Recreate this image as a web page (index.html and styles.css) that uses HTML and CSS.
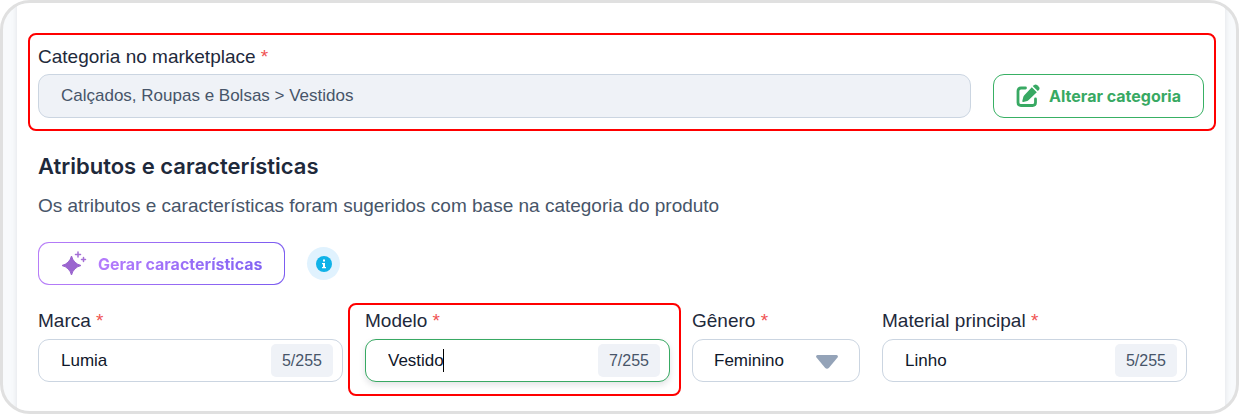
FILE: index.html
```html
<!DOCTYPE html>
<html lang="pt-BR">

<head>
    <meta charset="UTF-8">
    <meta name="viewport" content="width=device-width, initial-scale=1.0">
    <title>Atributos e características</title>
    <link rel="stylesheet" href="styles.css">
</head>

<body>
    <div class="frame">
        <main class="card">
            <section class="category-box">
                <label for="categoria">Categoria no marketplace <span class="required">*</span></label>
                <div class="category-row">
                    <input type="text" id="categoria" class="control readonly" value="Calçados, Roupas e Bolsas &gt; Vestidos" readonly>
                    <button type="button" class="btn btn-green">
                        <svg class="icon-edit" viewBox="0 0 24 24" aria-hidden="true">
                            <path d="M9.500 4H5Q2 4 2 7v11.500q0 3 3 3h11.500q3 0 3-3V15" fill="none" stroke="currentColor" stroke-width="2.800" stroke-linecap="round" />
                            <path d="M15.800 3.300l5 5-8.100 7.800q-.6.600-1.400.8l-4 1q-1.200.2-1-1l1-4q.2-.8.800-1.400z" fill="currentColor" />
                            <path d="M16.900 2.200l1-1q1.700-1.500 3.400 0l1.500 1.500q1.500 1.700 0 3.400l-1 1z" fill="currentColor" />
                        </svg>
                        Alterar categoria
                    </button>
                </div>
            </section>

            <section class="attributes">
                <h2>Atributos e características</h2>
                <p>Os atributos e características foram sugeridos com base na categoria do produto</p>

                <div class="actions">
                    <button type="button" class="btn btn-purple">
                        <svg class="icon-sparkles" viewBox="0 0 26 26" aria-hidden="true">
                            <path d="M10.500 5Q12.500 12.500 20 14.500 12.500 16.500 10.500 24 8.500 16.500 1 14.500 8.500 12.500 10.500 5z" fill="#9b66cf" stroke="#9b66cf" stroke-width="1" stroke-linejoin="round" />
                            <path d="M17 1v5M14.500 3.500h5M22.500 6.500v4M20.500 8.500h4" fill="none" stroke="#a56fd6" stroke-width="1.500" stroke-linecap="round" />
                        </svg>
                        <span class="gradient-text">Gerar características</span>
                    </button>
                    <button type="button" class="info" aria-label="Informações">
                        <svg viewBox="0 0 16 16" aria-hidden="true">
                            <circle cx="8" cy="8" r="8" fill="#0fb2e8" />
                            <path d="M7 3.500h2v2H7zM6 7h3v4h1v1.300H6V11h1V8.300H6z" fill="#fff" />
                        </svg>
                    </button>
                </div>

                <form class="fields">
                    <div class="field">
                        <label for="marca">Marca <span class="required">*</span></label>
                        <div class="control">
                            <input type="text" id="marca" value="Lumia" maxlength="255">
                            <span class="counter">5/255</span>
                        </div>
                    </div>
                    <div class="field highlighted">
                        <label for="modelo">Modelo <span class="required">*</span></label>
                        <div class="control active">
                            <input type="text" id="modelo" value="Vestido" maxlength="255">
                            <span class="caret"></span>
                            <span class="counter">7/255</span>
                        </div>
                    </div>
                    <div class="field">
                        <label for="genero">Gênero <span class="required">*</span></label>
                        <div class="control">
                            <select id="genero">
                                <option>Feminino</option>
                            </select>
                            <svg class="arrow" viewBox="0 0 22 14" aria-hidden="true">
                                <path d="M1.500 0h19q2.200.8 1 2.600L13 12.800q-2 2-4 0L.5 2.600Q-.7.800 1.500 0z" fill="#94a3b8" />
                            </svg>
                        </div>
                    </div>
                    <div class="field">
                        <label for="material">Material principal <span class="required">*</span></label>
                        <div class="control">
                            <input type="text" id="material" value="Linho" maxlength="255">
                            <span class="counter">5/255</span>
                        </div>
                    </div>
                </form>
            </section>
        </main>
    </div>
</body>

</html>
```
FILE: styles.css
```css
* {
    box-sizing: border-box;
}

body {
    margin: 0;
    background-color: #fff;
    font-family: "Liberation Sans", Arial, sans-serif;
    color: #1e293b;
}

.frame {
    min-height: 100vh;
    display: flex;
    padding: 0 11px 0 14px;
    border: 3px solid #e0e0e0;
    border-radius: 30px;
    background-color: #f8fafc;
    overflow: hidden;
}

.card {
    flex: 1;
    padding: 30px 9px 15px 11px;
    background-color: #fff;
    box-shadow: 0 0 6px rgba(15, 23, 42, 0.1);
}

label {
    display: block;
    font-size: 19px;
    line-height: 24px;
}

.required {
    color: #f05252;
}

.category-box {
    padding: 10px 10px 11px 8px;
    border: 2px solid #f00;
    border-radius: 8px;
}

.category-row {
    display: flex;
    gap: 22px;
    margin-top: 5px;
}

.control {
    height: 43px;
    border: 1px solid #cbd5e1;
    border-radius: 11px;
    background-color: #fff;
    font-size: 16px;
}

input,
select {
    font-family: inherit;
    font-size: 17px;
    color: #0f172a;
    outline: none;
}

.readonly {
    flex: 1;
    min-width: 0;
    height: 44px;
    padding: 0 22px;
    background-color: #eff2f7;
    font-size: 17px;
    color: #475569;
}

.btn {
    display: flex;
    align-items: center;
    padding: 0 22px;
    border: 1px solid #38b064;
    border-radius: 11px;
    background-color: #fff;
    font-family: Inter, sans-serif;
    font-size: 16px;
    font-weight: 700;
    white-space: nowrap;
    cursor: pointer;
}

.btn-green {
    gap: 9px;
    color: #38a963;
}

.icon-edit {
    width: 24px;
    height: 24px;
}

.attributes {
    padding: 21px 29px 0 10px;
}

h2 {
    margin: 0;
    font-family: Inter, sans-serif;
    font-size: 22px;
    font-weight: 600;
    line-height: 28px;
}

p {
    margin: 13px 0 24px;
    font-size: 19px;
    line-height: 25px;
    color: #475569;
}

.actions {
    display: flex;
    align-items: center;
    gap: 22px;
}

.btn-purple {
    gap: 11px;
    height: 43px;
    border-color: transparent;
    background: linear-gradient(#fff, #fff) padding-box,
        linear-gradient(90deg, #b77df8, #7c5cf0) border-box;
}

.icon-sparkles {
    width: 26px;
    height: 26px;
}

.gradient-text {
    background: linear-gradient(90deg, #b57bfc, #8163f3);
    -webkit-background-clip: text;
    background-clip: text;
    color: transparent;
}

.info {
    display: flex;
    align-items: center;
    justify-content: center;
    width: 33px;
    height: 33px;
    padding: 0;
    border: none;
    border-radius: 50%;
    background-color: #e0f2fe;
    cursor: pointer;
}

.info svg {
    width: 16px;
    height: 16px;
}

.fields {
    display: grid;
    grid-template-columns: 305fr 305fr 168fr 305fr;
    gap: 22px;
    margin-top: 24px;
}

.field {
    position: relative;
    min-width: 0;
}

.field .control {
    position: relative;
    display: flex;
    align-items: center;
    margin-top: 6px;
    padding-right: 9px;
}

.field input,
.field select {
    flex: 1;
    min-width: 0;
    height: 100%;
    padding: 0 0 0 22px;
    border: none;
    background: transparent;
}

.field select {
    appearance: none;
    width: 100%;
    padding-left: 21px;
}

.field .active {
    border-color: #38a963;
    box-shadow: 0 3px 6px rgba(15, 23, 42, 0.12);
}

.counter {
    padding: 0 11px;
    border-radius: 5px;
    background-color: #eff2f7;
    line-height: 33px;
    color: #475569;
}

/* red outline around the field being filled in */
.highlighted::before {
    content: "";
    position: absolute;
    top: -6px;
    right: -11px;
    bottom: -14px;
    left: -17px;
    border: 2px solid #f00;
    border-radius: 8px;
    pointer-events: none;
}

.caret {
    position: absolute;
    top: 9px;
    left: 77px;
    width: 1px;
    height: 23px;
    background-color: #000;
}

.arrow {
    position: absolute;
    top: 15px;
    right: 21px;
    width: 22px;
    height: 14px;
    pointer-events: none;
}
```
